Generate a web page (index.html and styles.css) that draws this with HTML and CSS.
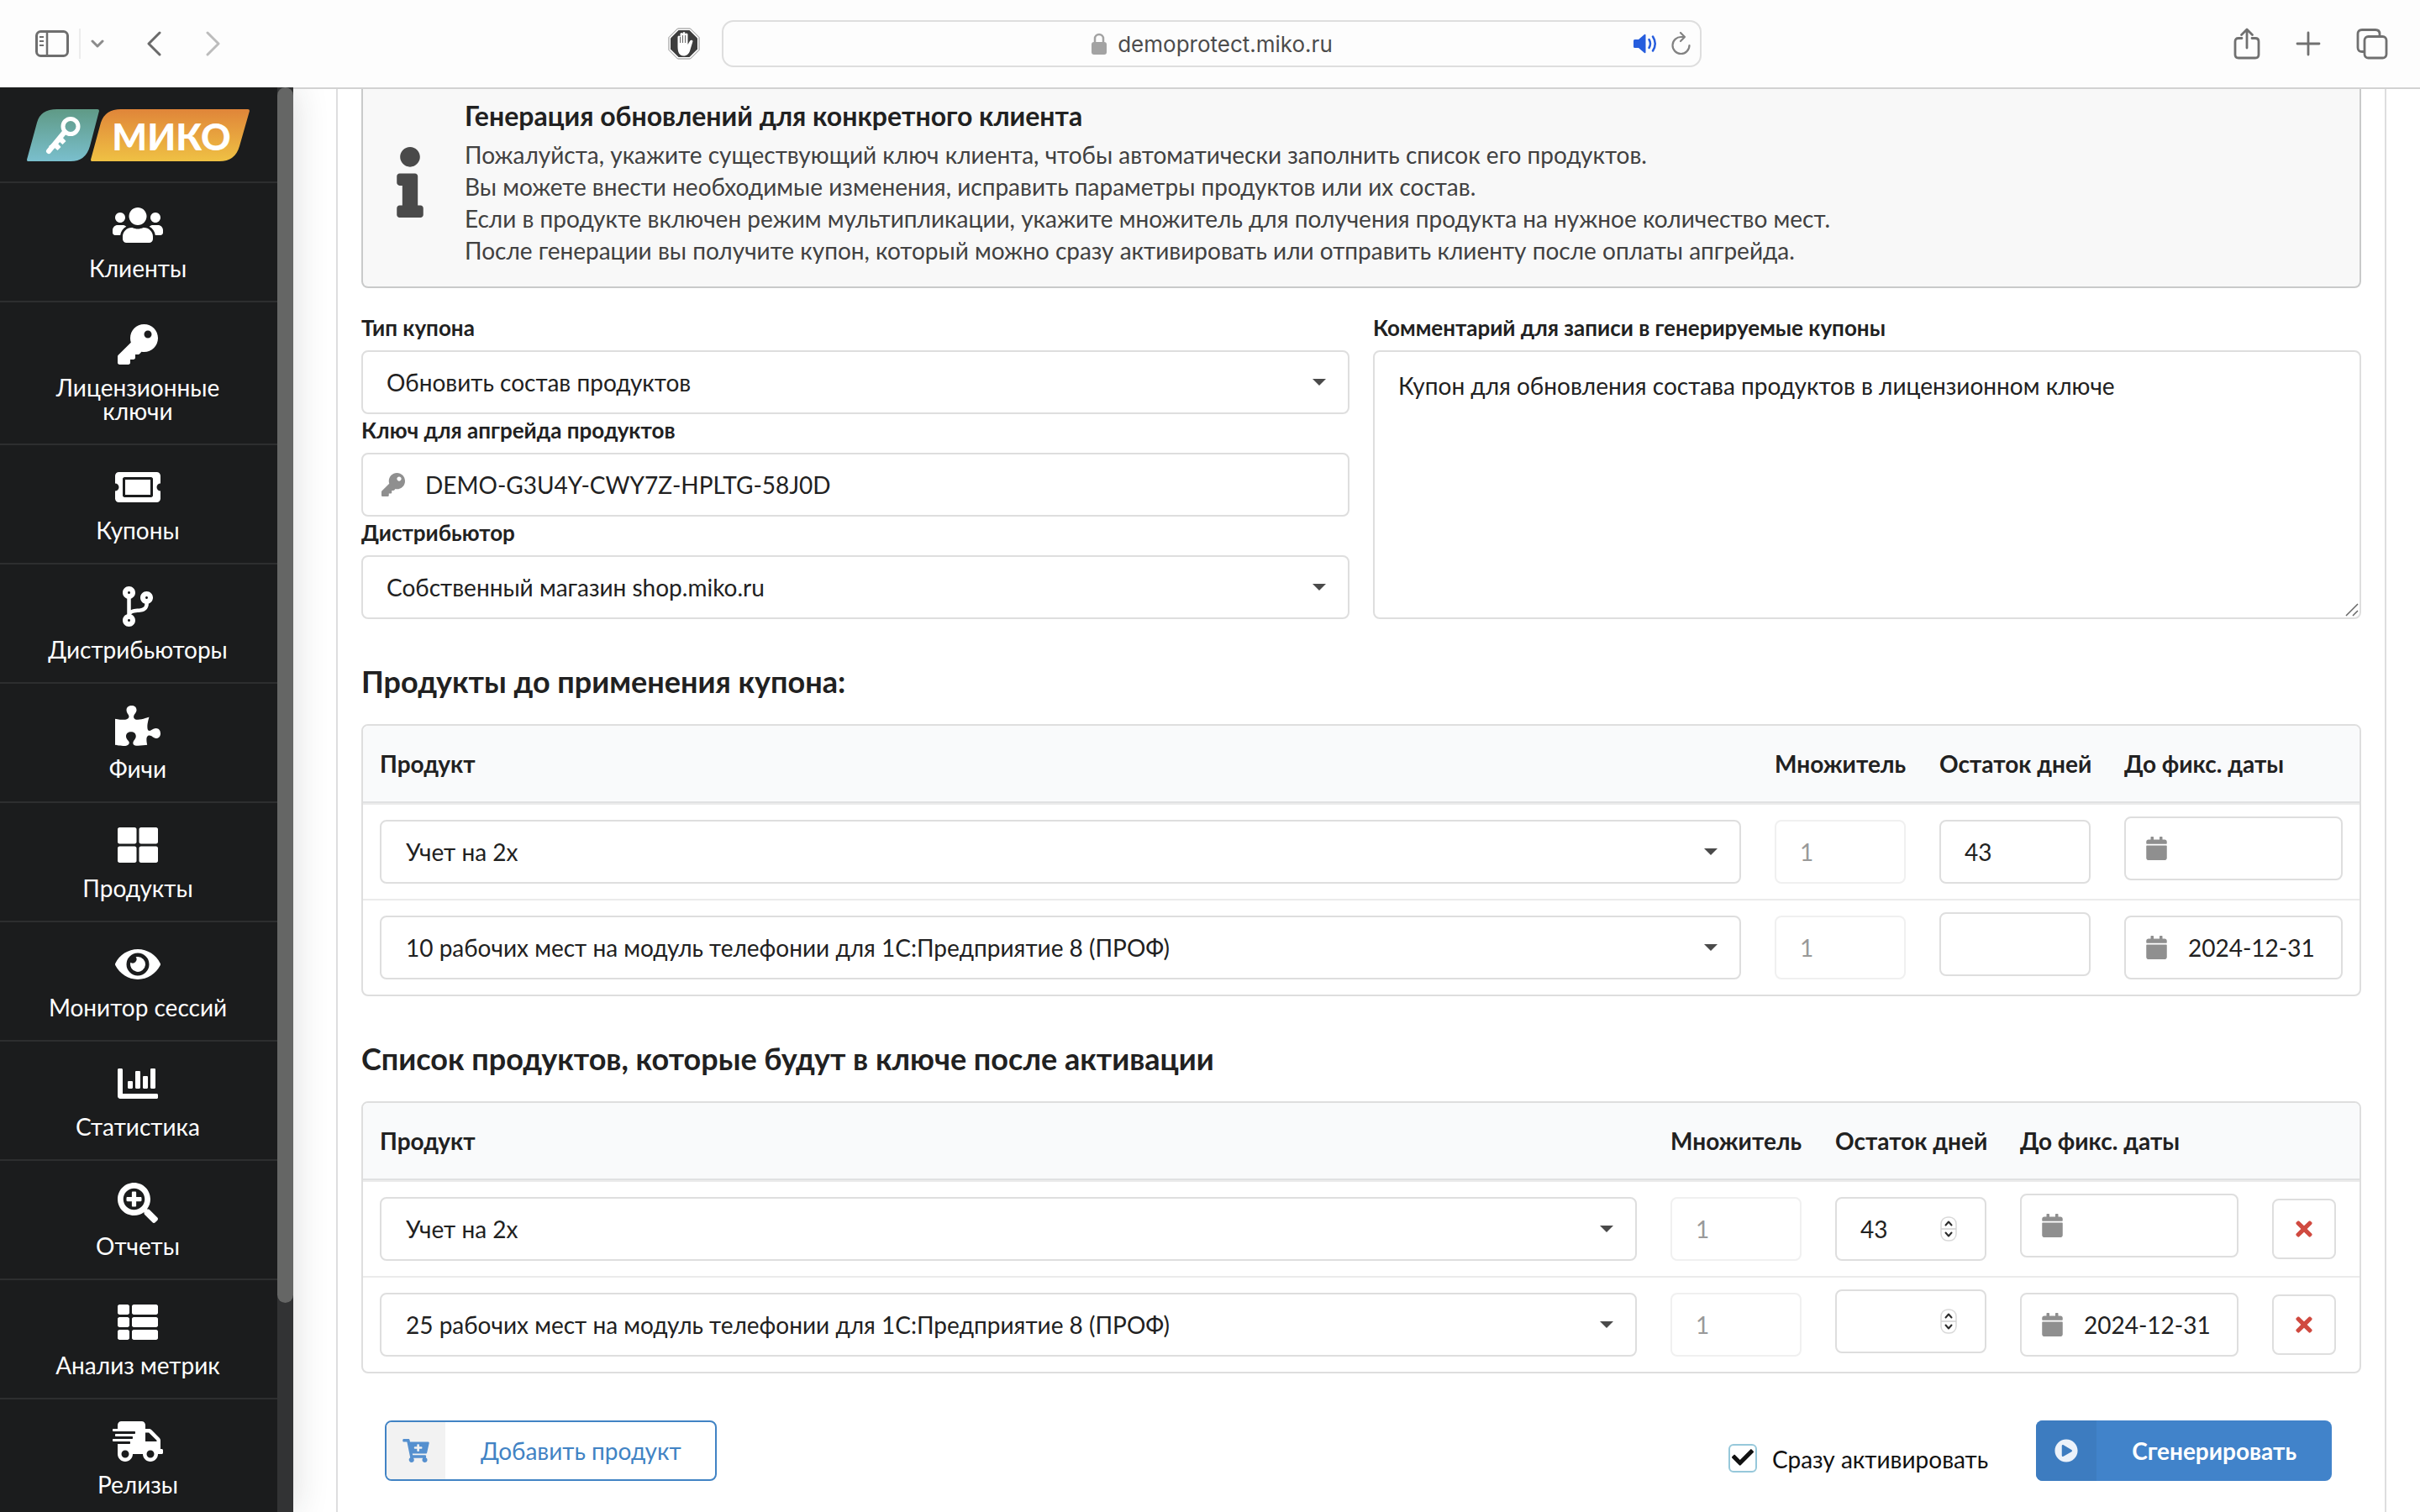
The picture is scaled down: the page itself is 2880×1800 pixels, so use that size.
FILE: index.html
```html
<!DOCTYPE html>
<html lang="ru">
<head>
<meta charset="utf-8">
<title>demoprotect.miko.ru</title>
<link rel="stylesheet" href="styles.css">
</head>
<body>
<svg class="sprite" aria-hidden="true">
  <symbol id="i-key" viewBox="0 0 512 512"><path d="M512 176.001C512 273.203 433.202 352 336 352c-11.22 0-22.19-1.062-32.827-3.069l-24.012 27.014A23.999 23.999 0 0 1 261.223 384H224v40c0 13.255-10.745 24-24 24h-40v40c0 13.255-10.745 24-24 24H24c-13.255 0-24-10.745-24-24v-78.059c0-6.365 2.529-12.47 7.029-16.971l161.802-161.802C163.108 213.814 160 195.271 160 176 160 78.798 238.797.001 335.999 0 433.488-.001 512 78.511 512 176.001zM336 128c0 26.51 21.49 48 48 48s48-21.49 48-48-21.49-48-48-48-48 21.49-48 48z"/></symbol>
  <symbol id="i-calendar" viewBox="0 0 448 512"><path d="M12 192h424c6.6 0 12 5.4 12 12v260c0 26.5-21.5 48-48 48H48c-26.5 0-48-21.5-48-48V204c0-6.6 5.4-12 12-12zm436-44v-36c0-26.5-21.5-48-48-48h-48V12c0-6.6-5.4-12-12-12h-40c-6.6 0-12 5.4-12 12v52H160V12c0-6.6-5.4-12-12-12h-40c-6.6 0-12 5.4-12 12v52H48C21.5 64 0 85.5 0 112v36c0 6.6 5.4 12 12 12h424c6.6 0 12-5.4 12-12z"/></symbol>
  <symbol id="i-times" viewBox="0 0 352 512"><path d="M242.72 256l100.07-100.07c12.28-12.28 12.28-32.19 0-44.48l-22.24-22.24c-12.28-12.28-32.19-12.28-44.48 0L176 189.28 75.93 89.21c-12.28-12.28-32.19-12.28-44.48 0L9.21 111.45c-12.28 12.28-12.28 32.19 0 44.48L109.28 256 9.21 356.07c-12.28 12.28-12.28 32.19 0 44.48l22.24 22.24c12.28 12.28 32.2 12.28 44.48 0L176 322.72l100.07 100.07c12.28 12.28 32.2 12.28 44.48 0l22.24-22.24c12.28-12.28 12.28-32.19 0-44.48L242.72 256z"/></symbol>
  <symbol id="i-stepper" viewBox="0 0 20 30"><rect x="1" y="1" width="18" height="28" rx="8" fill="#fff" stroke="#d9d9d9" stroke-width="1.5"/><path d="M1 15h18" stroke="#d0d0d0" stroke-width="1.5"/><path d="M6.5 10.5L10 6.5l3.5 4M6.5 19.5l3.5 4 3.5-4" fill="none" stroke="#2b2b2b" stroke-width="2" stroke-linecap="round" stroke-linejoin="round"/></symbol>
</svg>

<header class="toolbar">
  <div class="toolbar__left">
    <div class="toolbar__nav">
      <button class="tool tool--sidebar" aria-label="Боковая панель"><svg width="40" height="32" viewBox="0 0 40 32"><rect x="1.5" y="1.5" width="37" height="29" rx="5" fill="none" stroke="#6e6e6e" stroke-width="3"/><path d="M14 2v28" stroke="#6e6e6e" stroke-width="2.5"/><path d="M5 8h5M5 13h5M5 18h5" stroke="#6e6e6e" stroke-width="2"/></svg></button>
      <span class="toolbar__divider"></span>
      <button class="tool tool--menu" aria-label="Меню"><svg width="16" height="10" viewBox="0 0 16 10"><path d="M2 2l6 6 6-6" fill="none" stroke="#8b8b8b" stroke-width="3" stroke-linecap="round" stroke-linejoin="round"/></svg></button>
      <button class="tool tool--back" aria-label="Назад"><svg width="18" height="30" viewBox="0 0 18 30"><path d="M16 2L3 15l13 13" fill="none" stroke="#6a6a6a" stroke-width="3" stroke-linecap="round" stroke-linejoin="round"/></svg></button>
      <button class="tool" aria-label="Вперёд"><svg width="18" height="30" viewBox="0 0 18 30"><path d="M2 2l13 13L2 28" fill="none" stroke="#bcbcbc" stroke-width="3" stroke-linecap="round" stroke-linejoin="round"/></svg></button>
    </div>
    <button class="tool" aria-label="Блокировщик"><svg width="38" height="38" viewBox="0 0 38 38"><path d="M11.5 1h15L37 11.5v15L26.5 37h-15L1 26.5v-15z" fill="#fff" stroke="#8a8a8a"/><path d="M12.500 3h13L35 12.500v13L25.500 35h-13L3 25.500v-13z" fill="#3d3d3d"/><path d="M11.500 22V11a1.500 1.500 0 0 1 3 0V7.500a1.500 1.500 0 0 1 3 0V6.500a1.500 1.500 0 0 1 3 0V8a1.500 1.500 0 0 1 3 0V20l2.700-4.500c1-1.500 3.700-1 3.200 1l-3.200 10.500c-1.200 4-3.700 6.500-7.700 6.500-5.500 0-7-5-7-11.500z" fill="#fff"/><path d="M14.500 11v7M17.500 9v9M20.500 9v9" stroke="#3d3d3d" stroke-width=".8"/></svg></button>
  </div>
  <div class="address">
    <span class="address__site">
      <svg width="20" height="26" viewBox="0 0 20 26"><rect x="1" y="11" width="18" height="15" rx="3" fill="#a3a3a3"/><path d="M5 12V7a5 5 0 0 1 10 0v5" fill="none" stroke="#a3a3a3" stroke-width="2.500"/></svg>
      <input class="address__input" type="text" value="demoprotect.miko.ru" aria-label="Адрес">
    </span>
    <span class="address__tools">
      <button class="tool" aria-label="Звук"><svg width="30" height="26" viewBox="0 0 30 26"><path d="M1 9.500Q1 8 2.500 8H7l7-6q1.500-1 1.500 1v20q0 2-1.500 1l-7-6H2.500Q1 18 1 16.500z" fill="#265ddd"/><path d="M19.500 8q3 5 0 10M24 4.500q5.500 8.500 0 17" fill="none" stroke="#265ddd" stroke-width="2.500" stroke-linecap="round"/></svg></button>
      <button class="tool" aria-label="Обновить"><svg width="24" height="30" viewBox="0 0 24 30"><path d="M21.500 17a10 10 0 1 1-9.500-10h4M11 2l5 5-5 5" fill="none" stroke="#828282" stroke-width="2.200" stroke-linecap="round" stroke-linejoin="round"/></svg></button>
    </span>
  </div>
  <div class="toolbar__right">
    <button class="tool" aria-label="Поделиться"><svg width="32" height="38" viewBox="0 0 32 38"><path d="M10 12.500H6q-4 0-4 4V32q0 4 4 4h20q4 0 4-4V16.500q0-4-4-4h-4M16 24V2.500M9.500 8.500L16 2l6.500 6.500" fill="none" stroke="#707070" stroke-width="2.800" stroke-linecap="round" stroke-linejoin="round"/></svg></button>
    <button class="tool" aria-label="Новая вкладка"><svg width="30" height="30" viewBox="0 0 30 30"><path d="M15 2v26M2 15h26" stroke="#707070" stroke-width="2.800" stroke-linecap="round"/></svg></button>
    <button class="tool" aria-label="Все вкладки"><svg width="38" height="38" viewBox="0 0 38 38"><rect x="10" y="10.500" width="26" height="25.500" rx="4.500" fill="none" stroke="#707070" stroke-width="2.800"/><path d="M9.500 28.500H7q-5 0-5-5V7.500q0-5 5-5h16q5 0 5 5v2.500" fill="none" stroke="#707070" stroke-width="2.800"/></svg></button>
  </div>
</header>

<div class="page">
  <aside class="sidebar">
    <nav class="menu">
      <a class="menu__logo" href="#"><svg width="265" height="62" viewBox="0 0 265 62">
        <defs>
          <linearGradient id="teal" x1="0" y1="0" x2="0" y2="1"><stop offset="0" stop-color="#5f9a86"/><stop offset="1" stop-color="#7abfcd"/></linearGradient>
          <linearGradient id="orange" x1="0" y1="0" x2="0" y2="1"><stop offset="0" stop-color="#e08539"/><stop offset="1" stop-color="#efc144"/></linearGradient>
        </defs>
        <path d="M1 62Q0 62 0 60L12 16Q16 0 36 0H84Q86 0 86 2L75 44Q70 62 52 62z" fill="url(#teal)"/>
        <path d="M77 62Q76 62 76 60L88 16Q93 0 112 0H263Q265 0 265 2L253 44Q248 62 229 62z" fill="url(#orange)"/>
        <circle cx="52" cy="20.500" r="9" fill="none" stroke="#fff" stroke-width="5"/>
        <path d="M45 27L26 50" stroke="#fff" stroke-width="6" stroke-linecap="round"/>
        <path d="M42 33l4.500 5-4 4-3.500-3-2 2 3.500 4-4 4-3.500-3-3 3-4-5z" fill="#fff"/>
        <text class="logo-text" x="172" y="49" text-anchor="middle">МИКО</text>
      </svg></a>
      <a class="menu__item" href="#"><svg viewBox="0 0 640 512"><path d="M96 224c35.3 0 64-28.7 64-64s-28.7-64-64-64-64 28.7-64 64 28.7 64 64 64zm448 0c35.3 0 64-28.7 64-64s-28.7-64-64-64-64 28.7-64 64 28.7 64 64 64zm32 32h-64c-17.6 0-33.500 7.100-45.100 18.600 40.300 22.100 68.900 62 75.100 109.400h66c17.700 0 32-14.300 32-32v-32c0-35.300-28.700-64-64-64zm-256 0c61.900 0 112-50.100 112-112S381.900 32 320 32 208 82.100 208 144s50.100 112 112 112zm76.800 32h-8.300c-20.800 10-43.900 16-68.500 16s-47.600-6-68.500-16h-8.300C179.600 288 128 339.600 128 403.200V432c0 26.500 21.500 48 48 48h288c26.500 0 48-21.500 48-48v-28.800c0-63.600-51.600-115.200-115.200-115.200zm-223.700-13.400C161.500 263.100 145.600 256 128 256H64c-35.300 0-64 28.700-64 64v32c0 17.700 14.300 32 32 32h65.900c6.300-47.400 34.900-87.300 75.200-109.400z"/></svg>Клиенты</a>
      <a class="menu__item" href="#"><svg viewBox="0 0 512 512"><use href="#i-key"/></svg>Лицензионные ключи</a>
      <a class="menu__item" href="#"><svg viewBox="0 0 576 512"><path d="M128 160h320v192H128V160zm400 96c0 26.510 21.490 48 48 48v96c0 26.510-21.490 48-48 48H48c-26.510 0-48-21.490-48-48v-96c26.510 0 48-21.490 48-48s-21.490-48-48-48v-96c0-26.510 21.490-48 48-48h480c26.510 0 48 21.490 48 48v96c-26.510 0-48 21.490-48 48zm-48-104c0-13.255-10.745-24-24-24H120c-13.255 0-24 10.745-24 24v208c0 13.255 10.745 24 24 24h336c13.255 0 24-10.745 24-24V152z"/></svg>Купоны</a>
      <a class="menu__item" href="#"><svg viewBox="0 0 384 512"><path d="M384 144c0-44.200-35.800-80-80-80s-80 35.800-80 80c0 36.400 24.300 67.100 57.500 76.800-.6 16.100-4.200 28.500-11 36.900-15.400 19.200-49.300 22.400-85.200 25.700-28.200 2.600-57.400 5.400-81.300 16.900v-144c32.500-10.200 56-40.500 56-76.300 0-44.200-35.800-80-80-80S0 35.800 0 80c0 35.800 23.500 66.100 56 76.300v199.300C23.500 365.900 0 396.200 0 432c0 44.200 35.800 80 80 80s80-35.800 80-80c0-34-21.200-63.100-51.200-74.600 3.100-5.200 7.800-9.800 14.900-13.400 16.200-8.200 40.400-10.400 66.100-12.800 42.200-3.900 90-8.400 118.200-43.400 14-17.400 21.100-39.800 21.600-67.900 31.600-10.800 54.400-40.700 54.400-75.900zM80 64c8.800 0 16 7.200 16 16s-7.200 16-16 16-16-7.200-16-16 7.200-16 16-16zm0 384c-8.800 0-16-7.200-16-16s7.200-16 16-16 16 7.200 16 16-7.200 16-16 16zm224-320c8.800 0 16 7.200 16 16s-7.200 16-16 16-16-7.200-16-16 7.200-16 16-16z"/></svg>Дистрибьюторы</a>
      <a class="menu__item" href="#"><svg viewBox="0 0 576 512"><path d="M519.442 288.651c-41.519 0-59.500 31.593-82.058 31.593C377.409 320.244 432 144 432 144s-196.288 80-196.288-3.297c0-35.827 36.288-46.250 36.288-85.985C272 19.216 243.885 0 210.539 0c-34.654 0-66.366 18.891-66.366 56.346 0 41.364 31.711 59.277 31.711 81.750C175.885 207.719 0 166.758 0 166.758v333.237s178.635 41.047 178.635-28.662c0-22.473-40-40.107-40-81.471 0-37.456 29.250-56.346 63.577-56.346 33.673 0 61.788 19.216 61.788 54.717 0 39.735-36.288 50.158-36.288 85.985 0 60.803 129.675 25.730 181.230 25.730 0 0-34.725-120.101 25.827-120.101 35.962 0 46.423 36.152 86.308 36.152C556.712 416 576 387.990 576 354.443c0-34.199-18.962-65.792-56.558-65.792z"/></svg>Фичи</a>
      <a class="menu__item" href="#"><svg viewBox="0 0 512 512"><path d="M296 32h192c13.255 0 24 10.745 24 24v160c0 13.255-10.745 24-24 24H296c-13.255 0-24-10.745-24-24V56c0-13.255 10.745-24 24-24zm-80 0H24C10.745 32 0 42.745 0 56v160c0 13.255 10.745 24 24 24h192c13.255 0 24-10.745 24-24V56c0-13.255-10.745-24-24-24zM0 296v160c0 13.255 10.745 24 24 24h192c13.255 0 24-10.745 24-24V296c0-13.255-10.745-24-24-24H24c-13.255 0-24 10.745-24 24zm296 184h192c13.255 0 24-10.745 24-24V296c0-13.255-10.745-24-24-24H296c-13.255 0-24 10.745-24 24v160c0 13.255 10.745 24 24 24z"/></svg>Продукты</a>
      <a class="menu__item" href="#"><svg viewBox="0 0 576 512"><path d="M572.520 241.400C518.290 135.590 410.930 64 288 64S57.680 135.640 3.480 241.410a32.350 32.350 0 0 0 0 29.190C57.710 376.410 165.070 448 288 448s230.320-71.640 284.520-177.410a32.350 32.350 0 0 0 0-29.190zM288 400a144 144 0 1 1 144-144 143.930 143.930 0 0 1-144 144zm0-240a95.310 95.310 0 0 0-25.310 3.790 47.850 47.850 0 0 1-66.900 66.900A95.780 95.780 0 1 0 288 160z"/></svg>Монитор сессий</a>
      <a class="menu__item" href="#"><svg viewBox="0 0 512 512"><path d="M332.800 320h38.400c6.400 0 12.800-6.400 12.800-12.800V172.800c0-6.400-6.400-12.800-12.800-12.800h-38.400c-6.400 0-12.800 6.400-12.800 12.800v134.400c0 6.400 6.400 12.800 12.800 12.800zm96 0h38.400c6.400 0 12.800-6.400 12.800-12.800V76.800c0-6.400-6.400-12.800-12.800-12.800h-38.400c-6.400 0-12.800 6.400-12.800 12.800v230.400c0 6.400 6.400 12.800 12.800 12.800zm-288 0h38.400c6.400 0 12.800-6.400 12.800-12.800v-70.400c0-6.400-6.400-12.800-12.800-12.800h-38.400c-6.400 0-12.800 6.400-12.800 12.800v70.400c0 6.400 6.400 12.800 12.800 12.800zm96 0h38.400c6.400 0 12.800-6.400 12.800-12.800V108.800c0-6.400-6.400-12.800-12.800-12.800h-38.400c-6.400 0-12.800 6.400-12.800 12.800v198.400c0 6.400 6.400 12.800 12.800 12.800zM496 384H64V80c0-8.840-7.160-16-16-16H16C7.160 64 0 71.160 0 80v336c0 17.670 14.330 32 32 32h464c8.840 0 16-7.160 16-16v-32c0-8.840-7.160-16-16-16z"/></svg>Статистика</a>
      <a class="menu__item" href="#"><svg viewBox="0 0 512 512"><path d="M304 192v32c0 6.600-5.400 12-12 12h-56v56c0 6.600-5.400 12-12 12h-32c-6.600 0-12-5.400-12-12v-56h-56c-6.600 0-12-5.400-12-12v-32c0-6.600 5.400-12 12-12h56v-56c0-6.600 5.400-12 12-12h32c6.600 0 12 5.400 12 12v56h56c6.600 0 12 5.400 12 12zm201 284.700L476.700 505c-9.400 9.400-24.600 9.400-33.900 0L343 405.300c-4.500-4.500-7-10.600-7-17V372c-35.300 27.600-79.700 44-128 44C93.100 416 0 322.900 0 208S93.100 0 208 0s208 93.100 208 208c0 48.300-16.400 92.700-44 128h16.300c6.400 0 12.500 2.500 17 7l99.700 99.700c9.300 9.400 9.300 24.600 0 34zM344 208c0-75.200-60.800-136-136-136S72 132.800 72 208s60.800 136 136 136 136-60.800 136-136z"/></svg>Отчеты</a>
      <a class="menu__item" href="#"><svg viewBox="0 0 512 512"><path d="M149.333 216v80c0 13.255-10.745 24-24 24H24c-13.255 0-24-10.745-24-24v-80c0-13.255 10.745-24 24-24h101.333c13.255 0 24 10.745 24 24zM0 376v80c0 13.255 10.745 24 24 24h101.333c13.255 0 24-10.745 24-24v-80c0-13.255-10.745-24-24-24H24c-13.255 0-24 10.745-24 24zM125.333 32H24C10.745 32 0 42.745 0 56v80c0 13.255 10.745 24 24 24h101.333c13.255 0 24-10.745 24-24V56c0-13.255-10.745-24-24-24zm80 448H488c13.255 0 24-10.745 24-24v-80c0-13.255-10.745-24-24-24H205.333c-13.255 0-24 10.745-24 24v80c0 13.255 10.745 24 24 24zm-24-424v80c0 13.255 10.745 24 24 24H488c13.255 0 24-10.745 24-24V56c0-13.255-10.745-24-24-24H205.333c-13.255 0-24 10.745-24 24zm24 264H488c13.255 0 24-10.745 24-24v-80c0-13.255-10.745-24-24-24H205.333c-13.255 0-24 10.745-24 24v80c0 13.255 10.745 24 24 24z"/></svg>Анализ метрик</a>
      <a class="menu__item" href="#"><svg viewBox="0 0 640 512"><path d="M624 352h-16V243.900c0-12.700-5.100-24.900-14.100-33.900L494 110.100c-9-9-21.200-14.100-33.900-14.100H416V48c0-26.500-21.500-48-48-48H112C85.500 0 64 21.500 64 48v48H8c-4.400 0-8 3.600-8 8v16c0 4.400 3.600 8 8 8h272c4.400 0 8 3.600 8 8v16c0 4.400-3.600 8-8 8H40c-4.400 0-8 3.600-8 8v16c0 4.400 3.600 8 8 8h208c4.400 0 8 3.600 8 8v16c0 4.400-3.600 8-8 8H8c-4.400 0-8 3.600-8 8v16c0 4.400 3.600 8 8 8h208c4.400 0 8 3.600 8 8v16c0 4.400-3.600 8-8 8H64v128c0 53 43 96 96 96s96-43 96-96h128c0 53 43 96 96 96s96-43 96-96h48c8.800 0 16-7.200 16-16v-32c0-8.800-7.200-16-16-16zM160 464c-26.500 0-48-21.500-48-48s21.500-48 48-48 48 21.500 48 48-21.500 48-48 48zm320 0c-26.500 0-48-21.500-48-48s21.500-48 48-48 48 21.500 48 48-21.500 48-48 48zm80-208H416V144h44.100l99.900 99.900V256z"/></svg>Релизы</a>
    </nav>
    <div class="scrollbar"><div class="scrollbar__thumb"></div></div>
  </aside>

  <main class="content">
    <form class="panel">
      <section class="message">
        <svg class="message__icon" viewBox="0 0 192 512"><path d="M20 424.229h20V279.771H20c-11.046 0-20-8.954-20-20V212c0-11.046 8.954-20 20-20h112c11.046 0 20 8.954 20 20v212.229h20c11.046 0 20 8.954 20 20V492c0 11.046-8.954 20-20 20H20c-11.046 0-20-8.954-20-20v-47.771c0-11.046 8.954-20 20-20zM96 0C56.235 0 24 32.235 24 72s32.235 72 72 72 72-32.235 72-72S135.764 0 96 0z"/></svg>
        <div>
          <h2 class="message__title">Генерация обновлений для конкретного клиента</h2>
          <p class="message__text">Пожалуйста, укажите существующий ключ клиента, чтобы автоматически заполнить список его продуктов.<br>Вы можете внести необходимые изменения, исправить параметры продуктов или их состав.<br>Если в продукте включен режим мультипликации, укажите множитель для получения продукта на нужное количество мест.<br>После генерации вы получите купон, который можно сразу активировать или отправить клиенту после оплаты апгрейда.</p>
        </div>
      </section>

      <div class="fields">
        <div>
          <label class="label" for="type">Тип купона</label>
          <div class="dropdown"><select class="control" id="type"><option>Обновить состав продуктов</option></select></div>
          <label class="label" for="key">Ключ для апгрейда продуктов</label>
          <div class="with-icon"><svg class="with-icon__icon with-icon__icon--key"><use href="#i-key"/></svg><input class="control" id="key" type="text" value="DEMO-G3U4Y-CWY7Z-HPLTG-58J0D"></div>
          <label class="label" for="dist">Дистрибьютор</label>
          <div class="dropdown"><select class="control" id="dist"><option>Собственный магазин shop.miko.ru</option></select></div>
        </div>
        <div class="fields__comment">
          <label class="label" for="comment">Комментарий для записи в генерируемые купоны</label>
          <div class="comment">
            <textarea class="control control--area" id="comment">Купон для обновления состава продуктов в лицензионном ключе</textarea>
            <svg class="comment__grip" viewBox="0 0 16 16"><path d="M1 15L15 1M9 15l6-6" stroke="#666" stroke-width="1.500"/></svg>
          </div>
        </div>
      </div>

      <h3 class="heading">Продукты до применения купона:</h3>
      <table class="table">
        <thead><tr><th>Продукт</th><th class="col-mult">Множитель</th><th class="col-days">Остаток дней</th><th class="col-date">До фикс. даты</th></tr></thead>
        <tbody>
          <tr>
            <td><div class="dropdown"><select class="control" aria-label="Продукт"><option>Учет на 2х</option></select></div></td>
            <td><input class="control" type="text" value="1" disabled aria-label="Множитель"></td>
            <td><input class="control" type="text" value="43" aria-label="Остаток дней"></td>
            <td class="blank"><div class="with-icon"><svg class="with-icon__icon"><use href="#i-calendar"/></svg><input class="control" type="text" aria-label="До фикс. даты"></div></td>
          </tr>
          <tr>
            <td><div class="dropdown"><select class="control" aria-label="Продукт"><option>10 рабочих мест на модуль телефонии для 1С:Предприятие 8 (ПРОФ)</option></select></div></td>
            <td><input class="control" type="text" value="1" disabled aria-label="Множитель"></td>
            <td class="blank"><input class="control" type="text" aria-label="Остаток дней"></td>
            <td><div class="with-icon"><svg class="with-icon__icon"><use href="#i-calendar"/></svg><input class="control" type="text" value="2024-12-31" aria-label="До фикс. даты"></div></td>
          </tr>
        </tbody>
      </table>

      <h3 class="heading">Список продуктов, которые будут в ключе после активации</h3>
      <table class="table">
        <thead><tr><th>Продукт</th><th class="col-mult">Множитель</th><th class="col-days">Остаток дней</th><th class="col-date">До фикс. даты</th><th class="col-action"></th></tr></thead>
        <tbody>
          <tr>
            <td><div class="dropdown"><select class="control" aria-label="Продукт"><option>Учет на 2х</option></select></div></td>
            <td><input class="control" type="text" value="1" disabled aria-label="Множитель"></td>
            <td><div class="number"><input class="control" type="number" value="43" aria-label="Остаток дней"><svg class="number__stepper"><use href="#i-stepper"/></svg></div></td>
            <td class="blank"><div class="with-icon"><svg class="with-icon__icon"><use href="#i-calendar"/></svg><input class="control" type="text" aria-label="До фикс. даты"></div></td>
            <td><button class="remove" type="button" aria-label="Удалить"><svg width="20" height="28"><use href="#i-times"/></svg></button></td>
          </tr>
          <tr>
            <td><div class="dropdown"><select class="control" aria-label="Продукт"><option>25 рабочих мест на модуль телефонии для 1С:Предприятие 8 (ПРОФ)</option></select></div></td>
            <td><input class="control" type="text" value="1" disabled aria-label="Множитель"></td>
            <td class="blank"><div class="number"><input class="control" type="number" aria-label="Остаток дней"><svg class="number__stepper"><use href="#i-stepper"/></svg></div></td>
            <td><div class="with-icon"><svg class="with-icon__icon"><use href="#i-calendar"/></svg><input class="control" type="text" value="2024-12-31" aria-label="До фикс. даты"></div></td>
            <td><button class="remove" type="button" aria-label="Удалить"><svg width="20" height="28"><use href="#i-times"/></svg></button></td>
          </tr>
        </tbody>
      </table>

      <div class="actions">
        <button class="button button--outline" type="button"><span class="button__icon"><svg width="32" height="28" viewBox="0 0 576 512"><path d="M504.717 320H211.572l6.545 32h268.418c15.401 0 26.816 14.301 23.403 29.319l-5.517 24.276C523.112 414.668 536 433.828 536 456c0 31.202-25.519 56.444-56.824 55.994-29.823-.429-54.350-24.631-55.155-54.447-.44-16.287 6.085-31.049 16.803-41.548H231.176C241.553 426.165 248 440.326 248 456c0 31.813-26.528 57.431-58.670 55.938-28.540-1.325-51.751-24.385-53.251-52.917-1.158-22.034 10.436-41.455 28.051-51.586L93.883 64H24C10.745 64 0 53.255 0 40V24C0 10.745 10.745 0 24 0h102.529c11.401 0 21.228 8.021 23.513 19.190L159.208 64H551.990c15.401 0 26.816 14.301 23.403 29.319l-47.273 208C525.637 312.246 515.923 320 504.717 320zM408 168h-48v-40c0-8.837-7.163-16-16-16h-16c-8.837 0-16 7.163-16 16v40h-48c-8.837 0-16 7.163-16 16v16c0 8.837 7.163 16 16 16h48v40c0 8.837 7.163 16 16 16h16c8.837 0 16-7.163 16-16v-40h48c8.837 0 16-7.163 16-16v-16c0-8.837-7.163-16-16-16z"/></svg></span><span class="button__text">Добавить продукт</span></button>
        <div class="actions__right">
          <div class="check">
            <span class="check__mark"><input class="check__box" id="activate" type="checkbox" checked><svg class="check__tick" viewBox="0 0 512 512"><path d="M173.898 439.404l-166.400-166.400c-9.997-9.997-9.997-26.206 0-36.204l36.203-36.204c9.997-9.998 26.207-9.998 36.204 0L192 312.690 432.095 72.596c9.997-9.997 26.207-9.997 36.204 0l36.203 36.204c9.997 9.997 9.997 26.206 0 36.204l-294.400 294.401c-9.998 9.997-26.207 9.997-36.204-.001z"/></svg></span>
            <label for="activate">Сразу активировать</label>
          </div>
          <button class="button button--primary" type="submit"><span class="button__icon"><svg width="28" height="28" viewBox="0 0 512 512"><path d="M256 8C119 8 8 119 8 256s111 248 248 248 248-111 248-248S393 8 256 8zm115.700 272l-176 101c-15.800 8.800-35.700-2.500-35.700-21V152c0-18.400 19.800-29.800 35.700-21l176 107c16.400 9.200 16.400 32.900 0 42z"/></svg></span><span class="button__text">Сгенерировать</span></button>
        </div>
      </div>
    </form>
  </main>
</div>
</body>
</html>
```
FILE: styles.css
```css
* { box-sizing: border-box; }

body {
  margin: 0;
  height: 100vh;
  overflow: hidden;
  display: flex;
  flex-direction: column;
  background: #fff;
  color: #212121;
  font-family: Lato, "Open Sans", sans-serif;
  font-size: 28px;
  line-height: 40px;
}

button, input, select, textarea { font: inherit; color: inherit; margin: 0; }
svg { display: block; }
.sprite { position: absolute; width: 0; height: 0; }

/* Browser toolbar */
.toolbar {
  flex: none;
  display: grid;
  grid-template-columns: minmax(0, 1fr) 40.5vw minmax(0, 1fr);
  align-items: center;
  column-gap: 26px;
  padding: 24px 38px 24px 42px;
  background: #fdfdfd;
}
.toolbar__left, .toolbar__nav, .toolbar__right { display: flex; align-items: center; }
.toolbar__left { justify-content: space-between; }
.toolbar__right { justify-content: flex-end; gap: 42px; }
.tool { padding: 0; border: 0; background: none; }
.toolbar__divider { width: 2px; height: 36px; margin: 0 12px; background: #ececec; }
.tool--menu { margin-right: 50px; }
.tool--back { margin-right: 53px; }

.address {
  position: relative;
  display: flex;
  align-items: center;
  justify-content: center;
  height: 56px;
  border: 2px solid #dedede;
  border-radius: 14px;
}
.address__site { display: flex; align-items: center; gap: 12px; }
.address__input {
  field-sizing: content;
  padding: 2px 0 0;
  border: 0;
  background: none;
  color: #4c4c4c;
  font: 26px/36px Inter, sans-serif;
}
.address__tools {
  position: absolute;
  right: 10px;
  display: flex;
  align-items: center;
  gap: 16px;
}

/* Page */
.page { flex: 1; min-height: 0; display: flex; overflow: hidden; }
.sidebar {
  flex: none;
  display: flex;
  background: #1b1c1d;
  box-shadow: 0 0 40px rgba(34, 36, 38, .16);
}
.menu { width: 330px; overflow: hidden; }
.menu__logo, .menu__item { border-bottom: 2px solid #2d2e2f; }
.menu__logo { display: block; padding: 26px 32px 24px; }
.menu__item {
  display: flex;
  flex-direction: column;
  align-items: center;
  gap: 13px;
  padding: 26px 34px 25px 32px;
  color: #fff;
  line-height: 28px;
  text-align: center;
  text-decoration: none;
}
.menu__item svg { height: 48px; fill: #fff; }
.logo-text { font-size: 44px; font-weight: 900; fill: #fff; }

.scrollbar { width: 19px; background: #323334; }
.scrollbar__thumb { height: 85.3%; border-radius: 10px; background: #656665; }

.content { flex: 1; min-width: 0; padding: 0 40px 0 51px; border-top: 2px solid #d2d2d2; }
.panel {
  min-height: 100%;
  padding: 0 28px 37px;
  border: 2px solid #dededf;
  border-width: 0 2px;
}

.message {
  display: flex;
  align-items: center;
  gap: 49px;
  padding: 11px 40px 24px;
  border: 2px solid #c9caca;
  border-top: 0;
  border-radius: 0 0 8px 8px;
  background: #f8f8f8;
}
.message__icon { flex: none; width: 32px; height: 84px; fill: #4a4a4a; }
.message__title { margin: 0 0 6px; font-size: 32px; line-height: 42px; }
.message__text { margin: 0; line-height: 38px; color: #414141; }

/* Form controls */
.fields { display: flex; gap: 28px; padding-top: 28px; }
.fields > div { flex: 1; min-width: 0; }
.fields__comment { display: flex; flex-direction: column; }
.label { display: block; margin-bottom: 8px; font-size: 26px; font-weight: 700; line-height: 38px; }

.control {
  display: block;
  width: 100%;
  height: 76px;
  padding: 0 28px;
  border: 2px solid #dedede;
  border-radius: 8px;
  background: #fff;
  outline: 0;
  appearance: none;
}
.control:disabled { border-color: #f0f0f0; color: #999; }
.control[type="number"] { appearance: textfield; }

.comment { position: relative; flex: 1; display: flex; }
.control--area { height: auto; padding: 20px 28px; resize: none; }
.comment__grip { position: absolute; right: 3px; bottom: 3px; width: 16px; height: 16px; }

.dropdown, .with-icon, .number { position: relative; }
.dropdown::after {
  content: "";
  position: absolute;
  right: 28px;
  top: 34px;
  border: 8px solid transparent;
  border-top-color: #4a4a4a;
  border-bottom: 0;
}
.with-icon__icon { position: absolute; left: 26px; top: 24px; width: 25px; height: 28px; fill: #8f8f8f; }
.with-icon__icon--key { left: 24px; width: 28px; }
.with-icon .control { padding-left: 74px; }
.number__stepper { position: absolute; right: 35px; top: 23px; width: 20px; height: 30px; }

/* Tables */
.heading { margin: 51px 0 28px; font-size: 36px; line-height: 46px; }
.table {
  width: 100%;
  table-layout: fixed;
  border: 2px solid #dedede;
  border-radius: 8px;
  border-spacing: 0;
  border-collapse: separate;
  overflow: hidden;
}
.table th {
  height: 92px;
  padding: 0 20px;
  border-bottom: 2px solid #e0e1e2;
  background: #f9fafb;
  text-align: left;
  white-space: nowrap;
}
.table td { padding: 18px 20px; border-top: 2px solid #ebebeb; }
.table td.blank { padding-top: 14px; padding-bottom: 22px; }
.table .control { padding-left: 28px; padding-right: 10px; }
.table .dropdown .control { padding-left: 29px; }
.table .with-icon .control { padding-left: 74px; }
.col-mult { width: 196px; }
.col-days { width: 220px; }
.col-date { width: 300px; }
.col-action { width: 124px; }

.remove {
  display: flex;
  align-items: center;
  justify-content: center;
  width: 76px;
  height: 72px;
  padding: 0;
  border: 2px solid #dedede;
  border-radius: 8px;
  background: #fff;
}
.remove svg { fill: #d04a40; }

/* Actions */
.actions {
  display: flex;
  justify-content: space-between;
  padding: 56px 35px 0 28px;
}
.actions__right { display: flex; gap: 57px; }
.button {
  display: flex;
  height: 72px;
  padding: 0;
  border: 0;
  border-radius: 8px;
  overflow: hidden;
  line-height: 72px;
}
.button__icon { display: flex; align-items: center; justify-content: center; width: 72px; }
.button__text { padding: 0 42px; }
.button--outline { border: 2px solid #4183c4; background: #fff; color: #4183c4; line-height: 68px; }
.button--outline .button__icon { width: 70px; background: #f2f2f2; }
.button--outline .button__text { padding-right: 40px; }
.button--outline svg { fill: #5590cf; }
.button--primary { background: #4183ca; color: #fff; font-weight: 700; }
.button--primary .button__icon { background: #3d7cc0; }
.button--primary svg { fill: #ecf2fa; }

.check { display: flex; gap: 18px; padding-top: 28px; color: #111; line-height: 36px; }
.check__mark { position: relative; width: 34px; height: 34px; }
.check__box {
  display: block;
  width: 34px;
  height: 34px;
  border: 2px solid #96c8da;
  border-radius: 6px;
  background: #fff;
  appearance: none;
}
.check__tick { position: absolute; left: 4px; top: 3px; width: 26px; height: 26px; fill: #111; }
```
